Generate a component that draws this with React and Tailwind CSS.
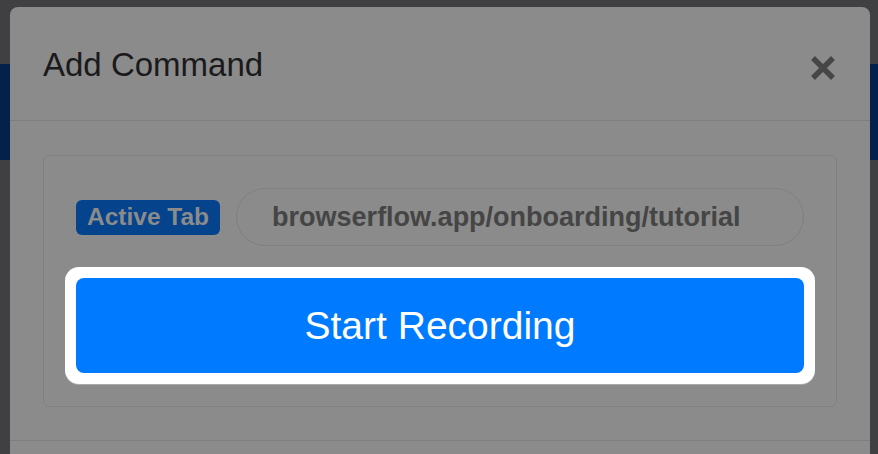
import { useState } from 'react';

/* Close glyph drawn as two thick strokes */
function CloseIcon() {
    return (
        <svg width="26" height="26" viewBox="0 0 26 26" className="block">
            <path d="M3 3 L23 23 M23 3 L3 23" stroke="#464646" strokeWidth="5.5" strokeLinecap="butt" />
        </svg>
    );
}

function ActiveTabRow({url}) {
    return (
        <div className="flex items-center gap-4">
            <span className="h-[35px] px-[11px] flex items-center rounded-[6px] bg-[#05438c] text-[#8b8b8b] font-bold text-[24.5px] leading-none">
                Active Tab
            </span>
            <div className="flex-1 h-[58px] flex items-center rounded-full border border-[#7f807f] pl-[35px] text-[#454545] font-bold text-[27px] leading-none">
                {url}
            </div>
        </div>
    );
}

export default function App() {
    const [recording, setRecording] = useState(false);

    return (
        <div className="relative w-[878px] h-[454px] overflow-hidden bg-[#404042]" style={{fontFamily: '"Liberation Sans", Arial, sans-serif'}}>
            {/* page behind the overlay */}
            <div className="mt-[64px] h-[96px] bg-[#03214a]" />

            {/* modal */}
            <div className="absolute top-[7px] left-[10px] w-[860px] h-[460px] rounded-t-[8px] bg-[#8a8b8a]">
                <div className="h-[114px] flex items-start justify-between pl-[33px] pr-[34px] border-b border-[#7e7f7e]">
                    <h2 className="mt-[41px] text-[33px] leading-[33px] text-[#1a1a1c]">Add Command</h2>
                    <button className="mt-[48px]">
                        <CloseIcon />
                    </button>
                </div>
                <div className="px-[33px] pt-[34px] pb-[33px] border-b border-[#7e7f7e]">
                    <div className="rounded-[6px] border border-[#7f807f] px-[32px] pt-[32px] pb-[33px]">
                        <ActiveTabRow url="browserflow.app/onboarding/tutorial" />
                        <div className="mt-[21px] -mx-[11px] -mb-[11px] p-[11px] rounded-[14px] bg-white shadow-[0_1px_0_#a9a9a9]">
                            <button
                                onClick={() => setRecording(!recording)}
                                className="w-full h-[95px] rounded-[8px] bg-[#007bff] text-white text-[39px] leading-none"
                            >
                                Start Recording
                            </button>
                        </div>
                    </div>
                </div>
            </div>
        </div>
    );
}
